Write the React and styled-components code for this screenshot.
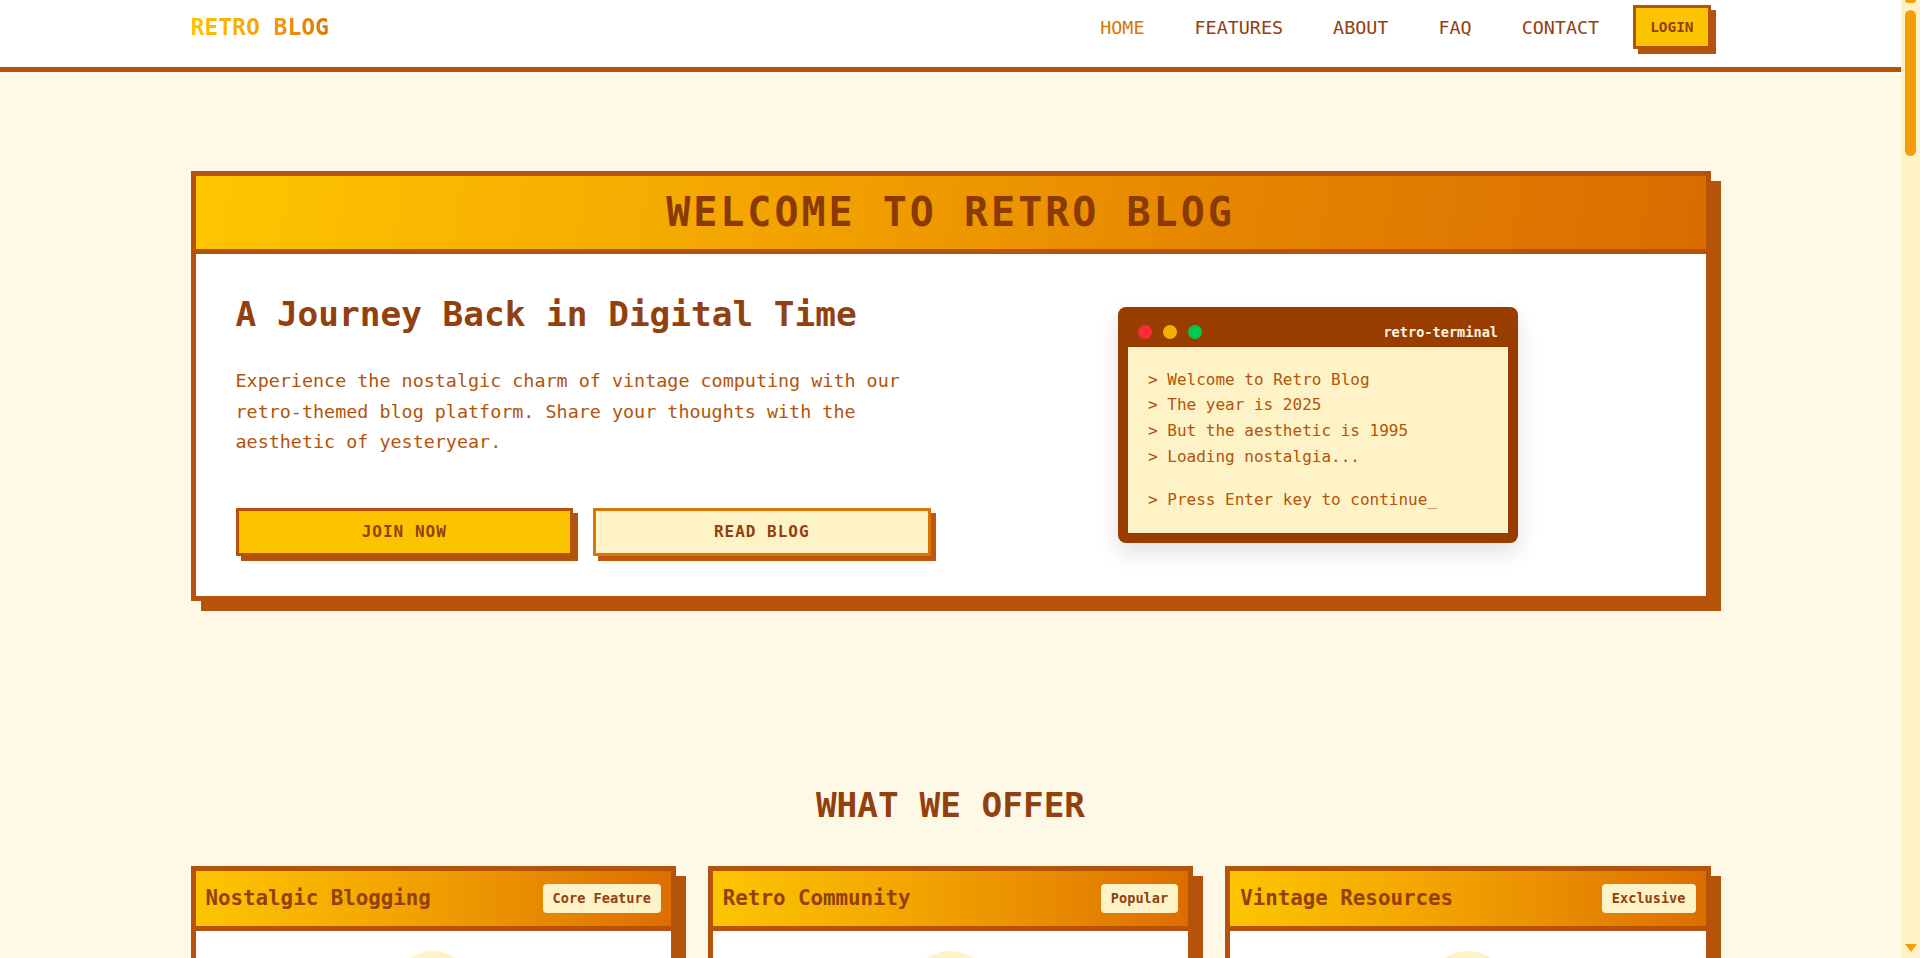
import React from 'react';
import styled, { createGlobalStyle } from 'styled-components';

const mono = `"DejaVu Sans Mono", "Liberation Mono", monospace`;
const C = {
  bg: '#fef9e7',
  cream: '#fef3c7',
  yellow: '#fcc400',
  orange: '#d97706',
  amber: '#f59e0b',
  rust: '#b45309',
  brown: '#92400e',
  term: '#983c00',
};

const GlobalStyle = createGlobalStyle`
  * { box-sizing: border-box; }
  html, body {
    margin: 0;
    height: 100%;
    overflow: hidden;
  }
  body {
    background: ${C.bg};
    font-family: ${mono};
    color: ${C.brown};
  }
`;

/* ---------- SHELL + SCROLL RAIL ---------- */
const Shell = styled.div`
  display: flex;
  height: 100vh;
`;
const Main = styled.main`
  flex: 1;
  min-width: 0;
  overflow-y: auto;
  overflow-x: hidden;
  scrollbar-width: none;
  background: ${C.bg};
  &::-webkit-scrollbar { display: none; }
`;
const ScrollRail = styled.div`
  flex: none;
  width: 19px;
  background: ${C.cream};
  display: flex;
  flex-direction: column;
  align-items: center;
  padding-bottom: 6px;
`;
const RailCap = styled.div`
  width: 11px;
  height: 3px;
  border-radius: 0 0 3px 3px;
  background: ${C.amber};
`;
const RailThumb = styled.div`
  width: 11px;
  height: 146px;
  margin-top: 7px;
  border-radius: 6px;
  background: ${C.amber};
`;
const RailArrow = styled.svg`
  margin-top: auto;
  display: block;
`;

const Container = styled.div`
  max-width: 1520px;
  margin: 0 auto;
`;

/* ---------- NAV ---------- */
const Nav = styled.nav`
  background: #fff;
  border-bottom: 5px solid ${C.rust};
`;
const NavInner = styled(Container)`
  display: flex;
  align-items: center;
  justify-content: space-between;
  padding: 5px 0 18px;
`;
const Logo = styled.a`
  font-size: 23px;
  font-weight: bold;
  text-decoration: none;
  background: linear-gradient(90deg, #ffc400 0%, #f59e0b 55%, #d97706 100%);
  -webkit-background-clip: text;
  background-clip: text;
  color: transparent;
`;
const NavList = styled.ul`
  display: flex;
  align-items: center;
  gap: 18px;
  list-style: none;
  margin: 0;
  padding: 0;
`;
const NavLink = styled.a`
  display: block;
  font-size: 18.4px;
  padding: 8px 16px;
  text-decoration: none;
  color: ${(p) => (p.$active ? C.orange : C.brown)};
`;
const LoginButton = styled.button`
  font-family: ${mono};
  font-size: 14.4px;
  font-weight: bold;
  line-height: 18px;
  padding: 10px 14px;
  background: ${C.yellow};
  color: ${C.brown};
  border: 3px solid ${C.rust};
  box-shadow: 5px 5px 0 ${C.rust};
  cursor: pointer;
`;

/* ---------- HERO ---------- */
const HeroSection = styled.section`
  padding: 99px 0 100px;
`;
const FrameCard = styled.div`
  background: #fff;
  border: 5px solid ${C.rust};
  box-shadow: 10px 10px 0 ${C.rust};
`;
const HeroHeader = styled.div`
  background: linear-gradient(100deg, #ffc600 0%, #f2a200 40%, #e58400 70%, #da6c00 100%);
  border-bottom: 5px solid ${C.rust};
  padding: 13px 20px;
  text-align: center;
`;
const HeroTitle = styled.h1`
  margin: 0;
  font-size: 40px;
  line-height: 47px;
  letter-spacing: 3px;
  font-weight: bold;
  color: #8a3a06;
`;
const HeroBody = styled.div`
  display: grid;
  grid-template-columns: 1fr 1fr;
  gap: 40px;
  align-items: center;
  padding: 40px;
`;
const HeroText = styled.div``;
const HeroHeading = styled.h2`
  margin: 0 0 31px;
  font-size: 34.4px;
  line-height: 1.2;
  font-weight: bold;
  color: ${C.brown};
`;
const HeroParagraph = styled.p`
  margin: 0 0 50px;
  font-size: 18.4px;
  line-height: 30.4px;
  color: ${C.rust};
`;
const ButtonRow = styled.div`
  display: flex;
  gap: 20px;
`;
const PixelButton = styled.button`
  flex: ${(p) => (p.$block ? 'none' : '1')};
  width: ${(p) => p.$width || 'auto'};
  font-family: ${mono};
  font-size: 16px;
  font-weight: bold;
  letter-spacing: 1px;
  line-height: 20px;
  padding: 11px 16px;
  color: ${C.brown};
  cursor: pointer;
  background: ${(p) => (p.$variant === 'light' ? C.cream : C.yellow)};
  border: 3px solid ${(p) => (p.$variant === 'light' ? C.orange : C.rust)};
  box-shadow: 5px 5px 0 ${(p) => (p.$variant === 'light' ? '#c2570c' : C.rust)};
`;

const TerminalWrap = styled.div`
  display: flex;
  justify-content: center;
`;
const Terminal = styled.div`
  width: 400px;
  background: ${C.term};
  border-radius: 8px;
  padding: 10px;
  box-shadow: 0 10px 22px rgba(0, 0, 0, 0.12);
`;
const TerminalBar = styled.div`
  height: 30px;
  display: flex;
  align-items: center;
  justify-content: space-between;
  padding: 0 10px;
`;
const Dots = styled.div`
  display: flex;
  gap: 11px;
`;
const Dot = styled.span`
  width: 14px;
  height: 14px;
  border-radius: 50%;
  background: ${(p) => p.$color};
`;
const TerminalName = styled.span`
  font-size: 13.6px;
  font-weight: bold;
  color: #fff7e6;
`;
const TerminalBody = styled.div`
  background: ${C.cream};
  padding: 20px;
  font-size: 16px;
  line-height: 1.6;
  color: ${C.rust};
`;
const TermLine = styled.div`
  margin-top: ${(p) => (p.$gap ? '18px' : '0')};
  white-space: pre;
`;

/* ---------- SECTIONS ---------- */
const Section = styled.section`
  padding: 84px 0 100px;
`;
const SectionTitle = styled.h2`
  margin: 0 0 40px;
  text-align: center;
  font-size: 34.4px;
  line-height: 1.2;
  font-weight: bold;
  color: ${C.brown};
`;
const Grid = styled.div`
  display: grid;
  grid-template-columns: repeat(${(p) => p.$cols || 3}, 1fr);
  gap: 32px;
`;
const CardHeader = styled.div`
  display: flex;
  align-items: center;
  justify-content: space-between;
  padding: 13px 10px;
  background: linear-gradient(90deg, #fdc500 0%, #f3a600 40%, #e98c00 70%, #dc6e00 100%);
  border-bottom: 5px solid ${C.rust};
`;
const CardTitle = styled.h3`
  margin: 0;
  font-size: 20.8px;
  line-height: 25px;
  font-weight: bold;
  color: ${C.brown};
`;
const Badge = styled.span`
  font-size: 13.6px;
  line-height: 17px;
  font-weight: bold;
  padding: 6px 10px;
  border-radius: 4px;
  background: ${C.cream};
  color: ${C.brown};
`;
const CardBody = styled.div`
  padding: 20px 24px 28px;
  display: flex;
  flex-direction: column;
  align-items: center;
  text-align: center;
`;
const IconCircle = styled.div`
  width: 84px;
  height: 84px;
  border-radius: 50%;
  background: ${C.cream};
  display: flex;
  align-items: center;
  justify-content: center;
  margin-bottom: 22px;
`;
const CardText = styled.p`
  margin: 0 0 20px;
  font-size: 16px;
  line-height: 1.7;
  color: ${C.rust};
  text-align: ${(p) => p.$align || 'center'};
`;
const FeatureList = styled.ul`
  list-style: none;
  margin: 0 0 24px;
  padding: 0;
  width: 100%;
  text-align: left;
  font-size: 15px;
  line-height: 2;
  color: ${C.brown};
`;

const PostMeta = styled.div`
  font-size: 13px;
  color: ${C.orange};
  margin-bottom: 12px;
  align-self: flex-start;
`;
const PostTitle = styled.h4`
  margin: 0 0 12px;
  align-self: flex-start;
  text-align: left;
  font-size: 20px;
  color: ${C.brown};
`;

const StatBox = styled.div`
  background: #fff;
  border: 5px solid ${C.rust};
  box-shadow: 10px 10px 0 ${C.rust};
  padding: 40px 20px;
  text-align: center;
`;
const StatNumber = styled.div`
  font-size: 48px;
  font-weight: bold;
  color: ${C.orange};
  margin-bottom: 12px;
`;
const StatLabel = styled.div`
  font-size: 16px;
  color: ${C.brown};
`;

const Quote = styled.blockquote`
  margin: 0;
  padding: 30px;
  font-size: 16px;
  line-height: 1.8;
  color: ${C.rust};
`;
const QuoteAuthor = styled.div`
  padding: 0 30px 30px;
  font-weight: bold;
  font-size: 15px;
`;

const FaqList = styled.div`
  max-width: 1000px;
  margin: 0 auto;
  display: flex;
  flex-direction: column;
  gap: 28px;
`;
const FaqItem = styled.div`
  background: #fff;
  border: 5px solid ${C.rust};
  box-shadow: 8px 8px 0 ${C.rust};
`;
const FaqQuestion = styled.div`
  padding: 18px 24px;
  background: ${C.cream};
  border-bottom: 3px solid ${C.rust};
  font-size: 18px;
  font-weight: bold;
  display: flex;
  justify-content: space-between;
`;
const FaqAnswer = styled.div`
  padding: 20px 24px;
  font-size: 16px;
  line-height: 1.7;
  color: ${C.rust};
`;

const FormBody = styled.div`
  padding: 40px;
  display: grid;
  grid-template-columns: 1fr 1fr;
  gap: 24px;
`;
const Field = styled.label`
  display: flex;
  flex-direction: column;
  gap: 8px;
  font-size: 15px;
  font-weight: bold;
  grid-column: ${(p) => (p.$wide ? '1 / -1' : 'auto')};
`;
const Input = styled.div`
  height: ${(p) => p.$h || '48px'};
  background: ${C.cream};
  border: 3px solid ${C.rust};
`;

const Footer = styled.footer`
  background: ${C.term};
  color: ${C.cream};
  border-top: 5px solid ${C.rust};
  padding: 70px 0 40px;
`;
const FooterGrid = styled(Container)`
  display: grid;
  grid-template-columns: 2fr 1fr 1fr 1fr;
  gap: 40px;
`;
const FooterHead = styled.h5`
  margin: 0 0 18px;
  font-size: 18px;
  color: ${C.yellow};
`;
const FooterText = styled.p`
  margin: 0 0 10px;
  font-size: 15px;
  line-height: 1.7;
`;
const Copyright = styled(Container)`
  margin-top: 60px;
  padding-top: 24px;
  border-top: 2px solid ${C.orange};
  text-align: center;
  font-size: 14px;
`;

const PenIcon = () => (
  <svg width="40" height="40" viewBox="0 0 24 24" fill="none" stroke={C.orange} strokeWidth="2" strokeLinecap="round" strokeLinejoin="round">
    <path d="M12 20h9" />
    <path d="M16.5 3.5a2.1 2.1 0 0 1 3 3L7 19l-4 1 1-4Z" />
  </svg>
);
const UsersIcon = () => (
  <svg width="40" height="40" viewBox="0 0 24 24" fill="none" stroke={C.orange} strokeWidth="2" strokeLinecap="round" strokeLinejoin="round">
    <path d="M16 21v-2a4 4 0 0 0-4-4H6a4 4 0 0 0-4 4v2" />
    <circle cx="9" cy="7" r="4" />
    <path d="M22 21v-2a4 4 0 0 0-3-3.87" />
    <path d="M16 3.13a4 4 0 0 1 0 7.75" />
  </svg>
);
const BookIcon = () => (
  <svg width="40" height="40" viewBox="0 0 24 24" fill="none" stroke={C.orange} strokeWidth="2" strokeLinecap="round" strokeLinejoin="round">
    <path d="M4 19.5A2.5 2.5 0 0 1 6.5 17H20" />
    <path d="M6.5 2H20v20H6.5A2.5 2.5 0 0 1 4 19.5v-15A2.5 2.5 0 0 1 6.5 2z" />
  </svg>
);

const features = [
  {
    title: 'Nostalgic Blogging',
    badge: 'Core Feature',
    icon: <PenIcon />,
    text: 'Write posts in a distraction-free editor inspired by the word processors of the early nineties.',
    list: ['> Markdown & plain text', '> Pixel-perfect themes', '> Auto-save to floppy'],
  },
  {
    title: 'Retro Community',
    badge: 'Popular',
    icon: <UsersIcon />,
    text: 'Connect with fellow enthusiasts on bulletin boards, guestbooks and web rings of the past.',
    list: ['> Guestbooks & BBS', '> Web rings', '> Weekly challenges'],
  },
  {
    title: 'Vintage Resources',
    badge: 'Exclusive',
    icon: <BookIcon />,
    text: 'Browse a curated archive of classic software, manuals, fonts and digital artifacts.',
    list: ['> Software archive', '> Pixel font library', '> Scanned manuals'],
  },
];

const posts = [
  ['Mar 12, 1995', 'The Joy of Dial-Up', 'Remembering the screech of a 28.8k modem and the patience it taught us.'],
  ['Apr 02, 1995', 'Building My First Homepage', 'Under construction GIFs, visitor counters and a lot of table layouts.'],
  ['May 18, 1995', 'Floppy Disk Memories', 'How 1.44 MB of storage shaped the way we saved and shared our work.'],
  ['Jun 07, 1995', 'CRT Glow After Midnight', 'Late nights, green phosphor and the hum of a beige tower computer.'],
  ['Jul 21, 1995', 'A Guide to Web Rings', 'Before search engines ruled, web rings helped us find kindred sites.'],
  ['Aug 30, 1995', 'Pixel Art Basics', 'Drawing sprites one square at a time with a 16-colour palette.'],
];

const quotes = [
  ['"It feels like switching on my old 486 again. Pure joy."', '- Pixel_Pete'],
  ['"Finally a blog that loads fast and looks like home."', '- ModemMary'],
  ['"The terminal intro alone is worth signing up for."', '- CRT_Kid'],
];

const faqs = [
  ['Is Retro Blog free to use?', 'Yes. Every account gets unlimited posts, themes and community access without paying a single coin.'],
  ['Can I import posts from other platforms?', 'You can import plain text, Markdown and HTML files from most popular blogging tools.'],
  ['Does it work on modern browsers?', 'Absolutely. The aesthetic is 1995, but the technology under the hood is fully up to date.'],
  ['Can I use my own domain?', 'Custom domains are supported and come with free certificates for every site.'],
  ['How do I join the community?', 'Create an account, sign the guestbook and join a web ring that matches your interests.'],
];

export default function App() {
  return (
    <Shell>
      <GlobalStyle />
      <Main>
        <Nav>
          <NavInner>
            <Logo href="#">RETRO BLOG</Logo>
            <NavList>
              <li><NavLink href="#" $active>HOME</NavLink></li>
              <li><NavLink href="#">FEATURES</NavLink></li>
              <li><NavLink href="#">ABOUT</NavLink></li>
              <li><NavLink href="#">FAQ</NavLink></li>
              <li><NavLink href="#">CONTACT</NavLink></li>
              <li><LoginButton>LOGIN</LoginButton></li>
            </NavList>
          </NavInner>
        </Nav>

        <HeroSection>
          <Container>
            <FrameCard>
              <HeroHeader>
                <HeroTitle>WELCOME TO RETRO BLOG</HeroTitle>
              </HeroHeader>
              <HeroBody>
                <HeroText>
                  <HeroHeading>A Journey Back in Digital Time</HeroHeading>
                  <HeroParagraph>
                    Experience the nostalgic charm of vintage computing with our retro-themed blog platform. Share your thoughts with the aesthetic of yesteryear.
                  </HeroParagraph>
                  <ButtonRow>
                    <PixelButton>JOIN NOW</PixelButton>
                    <PixelButton $variant="light">READ BLOG</PixelButton>
                  </ButtonRow>
                </HeroText>
                <TerminalWrap>
                  <Terminal>
                    <TerminalBar>
                      <Dots>
                        <Dot $color="#fb2c36" />
                        <Dot $color="#f0b100" />
                        <Dot $color="#00c950" />
                      </Dots>
                      <TerminalName>retro-terminal</TerminalName>
                    </TerminalBar>
                    <TerminalBody>
                      <TermLine>&gt; Welcome to Retro Blog</TermLine>
                      <TermLine>&gt; The year is 2025</TermLine>
                      <TermLine>&gt; But the aesthetic is 1995</TermLine>
                      <TermLine>&gt; Loading nostalgia...</TermLine>
                      <TermLine $gap>&gt; Press Enter key to continue_</TermLine>
                    </TerminalBody>
                  </Terminal>
                </TerminalWrap>
              </HeroBody>
            </FrameCard>
          </Container>
        </HeroSection>

        <Section>
          <Container>
            <SectionTitle>WHAT WE OFFER</SectionTitle>
            <Grid>
              {features.map((f) => (
                <FrameCard key={f.title}>
                  <CardHeader>
                    <CardTitle>{f.title}</CardTitle>
                    <Badge>{f.badge}</Badge>
                  </CardHeader>
                  <CardBody>
                    <IconCircle>{f.icon}</IconCircle>
                    <CardText>{f.text}</CardText>
                    <FeatureList>
                      {f.list.map((l) => <li key={l}>{l}</li>)}
                    </FeatureList>
                    <PixelButton $variant="light" $block $width="100%">LEARN MORE</PixelButton>
                  </CardBody>
                </FrameCard>
              ))}
            </Grid>
          </Container>
        </Section>

        <Section>
          <Container>
            <SectionTitle>LATEST POSTS</SectionTitle>
            <Grid>
              {posts.map(([date, title, text]) => (
                <FrameCard key={title}>
                  <CardHeader>
                    <CardTitle>Blog Post</CardTitle>
                    <Badge>New</Badge>
                  </CardHeader>
                  <CardBody>
                    <PostMeta>{date}</PostMeta>
                    <PostTitle>{title}</PostTitle>
                    <CardText $align="left">{text}</CardText>
                    <PixelButton $block $width="100%">READ MORE</PixelButton>
                  </CardBody>
                </FrameCard>
              ))}
            </Grid>
          </Container>
        </Section>

        <Section>
          <Container>
            <SectionTitle>BY THE NUMBERS</SectionTitle>
            <Grid $cols={4}>
              <StatBox><StatNumber>1995</StatNumber><StatLabel>Aesthetic Year</StatLabel></StatBox>
              <StatBox><StatNumber>12K</StatNumber><StatLabel>Retro Bloggers</StatLabel></StatBox>
              <StatBox><StatNumber>48K</StatNumber><StatLabel>Posts Written</StatLabel></StatBox>
              <StatBox><StatNumber>256</StatNumber><StatLabel>Pixel Themes</StatLabel></StatBox>
            </Grid>
          </Container>
        </Section>

        <Section>
          <Container>
            <SectionTitle>GUESTBOOK</SectionTitle>
            <Grid>
              {quotes.map(([q, a]) => (
                <FrameCard key={a}>
                  <CardHeader>
                    <CardTitle>Entry</CardTitle>
                    <Badge>Signed</Badge>
                  </CardHeader>
                  <Quote>{q}</Quote>
                  <QuoteAuthor>{a}</QuoteAuthor>
                </FrameCard>
              ))}
            </Grid>
          </Container>
        </Section>

        <Section>
          <Container>
            <SectionTitle>FAQ</SectionTitle>
            <FaqList>
              {faqs.map(([q, a]) => (
                <FaqItem key={q}>
                  <FaqQuestion><span>{q}</span><span>[-]</span></FaqQuestion>
                  <FaqAnswer>{a}</FaqAnswer>
                </FaqItem>
              ))}
            </FaqList>
          </Container>
        </Section>

        <Section>
          <Container>
            <SectionTitle>CONTACT</SectionTitle>
            <FrameCard>
              <HeroHeader>
                <HeroTitle>SEND US A MESSAGE</HeroTitle>
              </HeroHeader>
              <FormBody>
                <Field>NAME<Input /></Field>
                <Field>EMAIL<Input /></Field>
                <Field $wide>SUBJECT<Input /></Field>
                <Field $wide>MESSAGE<Input $h="220px" /></Field>
                <Field $wide><PixelButton $block $width="300px">SEND MESSAGE</PixelButton></Field>
              </FormBody>
            </FrameCard>
          </Container>
        </Section>

        <Footer>
          <FooterGrid>
            <div>
              <FooterHead>RETRO BLOG</FooterHead>
              <FooterText>A blogging platform for people who miss the beige computers, the modem sounds and the handmade homepages of the nineties.</FooterText>
            </div>
            <div>
              <FooterHead>EXPLORE</FooterHead>
              <FooterText>Home</FooterText>
              <FooterText>Features</FooterText>
              <FooterText>About</FooterText>
            </div>
            <div>
              <FooterHead>HELP</FooterHead>
              <FooterText>FAQ</FooterText>
              <FooterText>Contact</FooterText>
              <FooterText>Guestbook</FooterText>
            </div>
            <div>
              <FooterHead>FOLLOW</FooterHead>
              <FooterText>Web Ring</FooterText>
              <FooterText>Newsletter</FooterText>
              <FooterText>RSS Feed</FooterText>
            </div>
          </FooterGrid>
          <Copyright>© 2025 Retro Blog. Best viewed in 800x600.</Copyright>
        </Footer>
      </Main>

      <ScrollRail aria-hidden="true">
        <RailCap />
        <RailThumb />
        <RailArrow width="12" height="8" viewBox="0 0 12 8">
          <polygon points="0,0 12,0 6,8" fill={C.amber} />
        </RailArrow>
      </ScrollRail>
    </Shell>
  );
}
